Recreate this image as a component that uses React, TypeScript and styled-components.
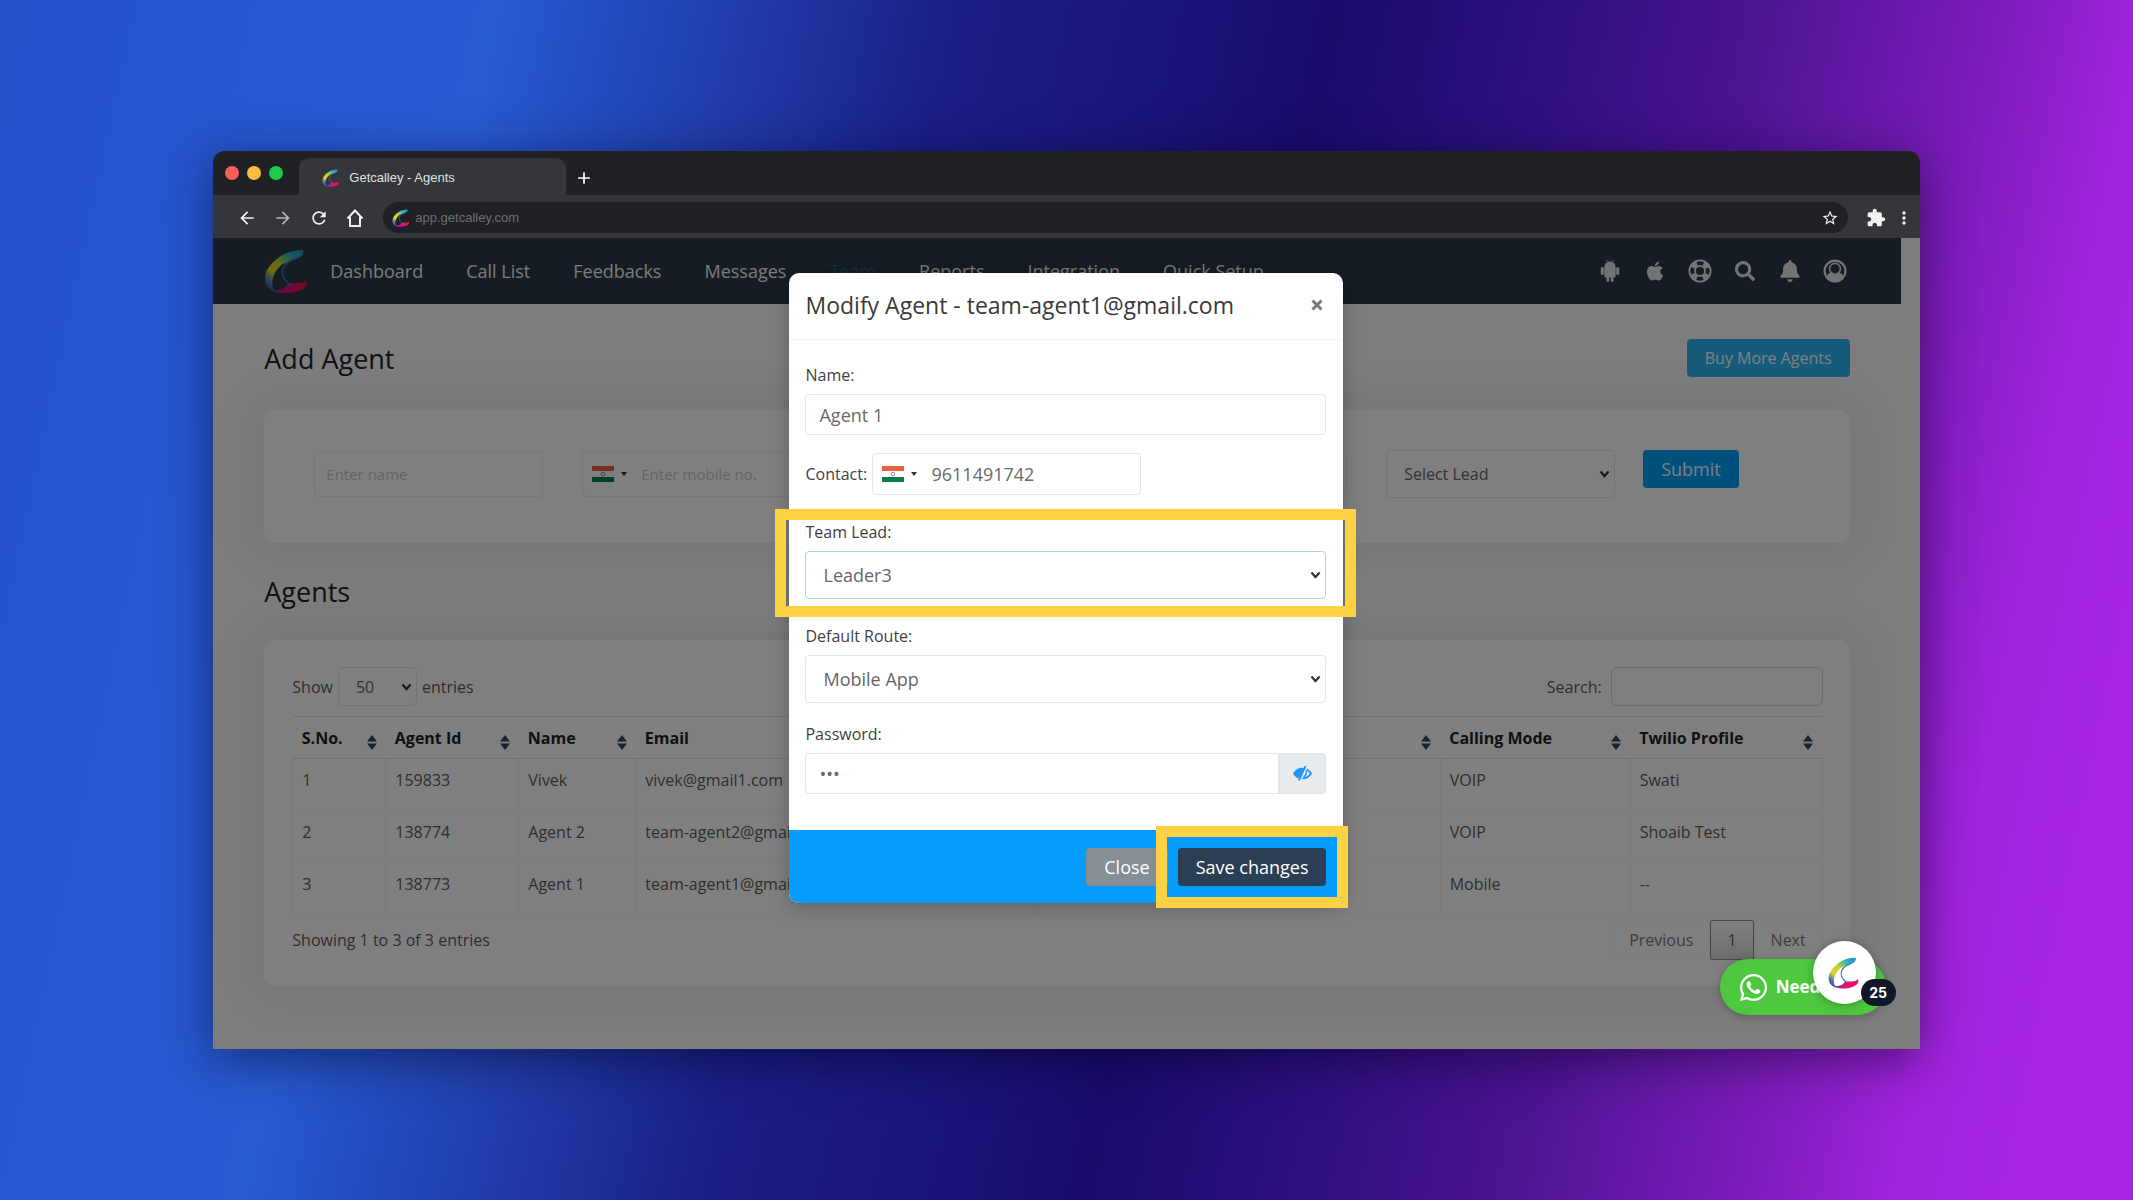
import React, { useState } from "react";
import styled, { createGlobalStyle, css } from "styled-components";
import {
  MdArrowBack,
  MdArrowForward,
  MdRefresh,
  MdStarBorder,
  MdExtension,
  MdMoreVert,
  MdAdd,
} from "react-icons/md";
import { FaApple, FaSearch, FaBell, FaWhatsapp } from "react-icons/fa";

const GlobalStyle = createGlobalStyle`
  *, *::before, *::after { box-sizing: border-box; }
  body {
    margin: 0;
    font-family: "Open Sans", "Noto Sans", sans-serif;
    font-size: 16px;
    line-height: 24px;
    color: #5c5c5c;
  }
  button, input, select { font: inherit; margin: 0; }
  button { cursor: pointer; }
`;

/* ---------- backdrop and browser frame ---------- */

const Stage = styled.div`
  display: flex;
  align-items: center;
  justify-content: center;
  min-height: 100vh;
  background: linear-gradient(
    102deg,
    #2652cc 0%,
    #2858d2 14%,
    #285ad2 21%,
    #2140ae 30%,
    #1b1f88 40%,
    #1a1478 50%,
    #190b6c 56%,
    #2f1080 65%,
    #4c1494 74%,
    #7a1cb8 83%,
    #a023dd 90%,
    #a826e8 96%
  );
`;

const BrowserWindow = styled.div`
  width: 80%;
  border-radius: 12px 12px 0 0;
  background: #35363a;
  box-shadow: 0 10px 50px rgba(0, 0, 20, 0.5);
`;

const TabStrip = styled.div`
  display: flex;
  align-items: flex-end;
  height: 44px;
  padding-left: 12px;
  border-radius: 12px 12px 0 0;
  background: #202124;
`;

const Lights = styled.div`
  display: flex;
  gap: 8px;
  align-self: center;
  margin-right: 16px;
`;

const Light = styled.span<{ $color: string }>`
  width: 14px;
  height: 14px;
  border-radius: 50%;
  background: ${(p) => p.$color};
`;

const Tab = styled.div`
  display: flex;
  align-items: center;
  gap: 9px;
  width: 267px;
  height: 37px;
  padding: 3px 0 0 23px;
  border-radius: 10px 10px 0 0;
  background: #35363a;
  color: #dfe1e5;
  font-family: "Liberation Sans", Arial, sans-serif;
  font-size: 13px;
`;

const NewTab = styled.button`
  display: flex;
  align-items: center;
  height: 34px;
  margin-left: 8px;
  padding: 0;
  border: 0;
  background: none;
  color: #fff;
  font-size: 20px;
`;

const Toolbar = styled.div`
  display: flex;
  align-items: center;
  height: 43px;
  padding: 2px 6px 0 16px;
`;

const ToolButton = styled.button<{ $dim?: boolean }>`
  display: flex;
  align-items: center;
  justify-content: center;
  width: 36px;
  height: 30px;
  padding: 0;
  border: 0;
  background: none;
  color: ${(p) => (p.$dim ? "#b4b6ba" : "#f1f1f1")};
  font-size: 20px;
`;

const AddressBar = styled.div`
  display: flex;
  flex: 1;
  align-items: center;
  gap: 5px;
  height: 31px;
  margin: 0 10px 0 10px;
  padding: 0 9px;
  border-radius: 16px;
  background: #202124;
  color: #f1f1f1;
  font-size: 18px;
`;

const AddressInput = styled.input`
  flex: 1;
  min-width: 0;
  padding: 0;
  border: 0;
  outline: 0;
  background: none;
  color: #6c6e72;
  font-family: "Liberation Sans", Arial, sans-serif;
  font-size: 13px;
`;

const MenuButton = styled(ToolButton)`
  width: 20px;
`;

/* ---------- web page ---------- */

const Viewport = styled.div`
  position: relative;
  background: #fbfbfb;
`;

const NavBar = styled.header`
  display: flex;
  align-items: center;
  height: 66px;
  margin-right: 19px;
  padding: 0 54px 0 51px;
  background: #2a3949;
`;

const NavLinks = styled.nav`
  display: flex;
  flex: 1;
  gap: 43px;
  margin-left: 21px;
`;

const NavLink = styled.a<{ $active?: boolean }>`
  color: ${(p) => (p.$active ? "#2c5878" : "#f4f4f4")};
  font-size: 18px;
  text-decoration: none;
`;

const NavIcons = styled.div`
  display: flex;
  align-items: center;
  gap: 21px;
`;

const NavIconButton = styled.button`
  display: flex;
  align-items: center;
  justify-content: center;
  width: 24px;
  height: 24px;
  padding: 0;
  border: 0;
  background: none;
  color: #e4e6e8;
  font-size: 22px;
`;

const Page = styled.main`
  padding: 0 70px 63px 51px;
`;

const TitleRow = styled.div`
  display: flex;
  align-items: center;
  justify-content: space-between;
  padding: 35px 0 33px;
`;

const Heading = styled.h1`
  margin: 0;
  color: #222;
  font-size: 27px;
  font-weight: 400;
  line-height: 37px;
`;

const SubHeading = styled(Heading).attrs({ as: "h2" })`
  padding: 30px 0;
`;

const SolidButton = styled.button<{ $tone: string; $size?: number }>`
  height: 38px;
  padding: 0 18px;
  border: 0;
  border-radius: 4px;
  background: ${(p) => p.$tone};
  color: #fff;
  font-size: ${(p) => p.$size ?? 18}px;
  white-space: nowrap;
`;

const Card = styled.section`
  border-radius: 10px;
  background: #fff;
  box-shadow: 0 0 50px 20px rgba(0, 0, 0, 0.06);
`;

const AddForm = styled.form`
  display: flex;
  gap: 28px;
  align-items: flex-start;
  padding: 40px 111px 45px 50px;
`;

const FieldGrid = styled.div`
  display: grid;
  flex: 1;
  grid-template-columns: repeat(5, minmax(0, 1fr));
  align-items: center;
  gap: 39px;
`;

const fieldBox = css`
  width: 100%;
  border: 1px solid #e6e6e6;
  border-radius: 4px;
  outline: 0;
  background: #fff;
`;

const TextField = styled.input<{ $h?: number; $pad?: number }>`
  ${fieldBox}
  height: ${(p) => p.$h ?? 41}px;
  padding: 0 ${(p) => p.$pad ?? 13}px;
  color: #6a6a6a;
  font-size: 18px;
  &::placeholder { color: #c8c8c8; opacity: 1; }
`;

const AddField = styled(TextField).attrs({ $h: 46, $pad: 11 })`
  border-color: #ececec;
  font-size: 15px;
`;

const PhoneBox = styled.div<{ $h: number; $light?: boolean }>`
  ${fieldBox}
  display: flex;
  align-items: center;
  height: ${(p) => p.$h}px;
  padding-left: 9px;
  font-size: ${(p) => (p.$light ? 15 : 18)}px;
  border-color: ${(p) => (p.$light ? "#ececec" : "#e6e6e6")};
`;

const PhoneInput = styled.input`
  flex: 1;
  min-width: 0;
  padding: 0 0 0 14px;
  border: 0;
  outline: 0;
  background: none;
  color: #6a6a6a;
  &::placeholder { color: #c8c8c8; opacity: 1; }
`;

const FlagButton = styled.button`
  display: flex;
  align-items: center;
  gap: 7px;
  padding: 0;
  border: 0;
  background: none;
`;

const Caret = styled.span`
  border: 3px solid transparent;
  border-top: 4px solid #333;
  border-bottom: 0;
`;

const SelectWrap = styled.div<{ $w?: number }>`
  position: relative;
  width: ${(p) => (p.$w ? `${p.$w}px` : "100%")};

  svg {
    position: absolute;
    top: 50%;
    right: 5px;
    width: 11px;
    height: 8px;
    margin-top: -4px;
    pointer-events: none;
  }
`;

const NativeSelect = styled.select<{ $h: number; $focus?: boolean; $size?: number }>`
  ${fieldBox}
  display: block;
  height: ${(p) => p.$h}px;
  padding: 0 17px;
  appearance: none;
  color: #666;
  font-size: ${(p) => p.$size ?? 16}px;
  border-color: ${(p) => (p.$focus ? "#a9d3de" : "#e6e6e6")};
`;

const TableCard = styled(Card)`
  padding: 27px 27px 26px 28px;
`;

const TableTools = styled.div`
  display: flex;
  align-items: center;
  justify-content: space-between;
  margin-bottom: 10px;
`;

const InlineLabel = styled.label`
  display: flex;
  align-items: center;
  gap: 5px;
  color: #5c5c5c;
`;

const SearchField = styled(TextField).attrs({ $h: 39 })`
  width: 212px;
  margin-left: 4px;
  border-color: #d8d8d8;
  border-radius: 6px;
`;

const AgentTable = styled.table`
  width: 100%;
  border-collapse: collapse;
  table-layout: fixed;
`;

const Column = styled.col<{ $w?: string }>`
  width: ${(p) => p.$w ?? "auto"};
`;

const HeadCell = styled.th`
  height: 42px;
  padding: 0 9px;
  border-top: 1px solid #e4e4e4;
  border-bottom: 1px solid #e4e4e4;
  color: #222;
  font-size: 16px;
  font-weight: 700;
  text-align: left;
`;

const HeadLabel = styled.div`
  display: flex;
  align-items: center;
  justify-content: space-between;
  height: 24px;

  svg { margin-top: 9px; }
`;

const BodyCell = styled.td`
  height: 52px;
  padding: 9px 0 0 9px;
  border: 1px solid #f4f4f4;
  color: #5c5c5c;
  vertical-align: top;
  white-space: nowrap;
`;

const TableFoot = styled.div`
  display: flex;
  align-items: center;
  justify-content: space-between;
  margin-top: 5px;
`;

const Pager = styled.div`
  display: flex;
  height: 40px;
`;

const PageButton = styled.button<{ $current?: boolean }>`
  padding: 0 16px;
  border: 1px solid ${(p) => (p.$current ? "#8c8c8c" : "#f6f6f6")};
  border-radius: 2px;
  background: ${(p) => (p.$current ? "linear-gradient(#fff, #dcdcdc)" : "none")};
  color: ${(p) => (p.$current ? "#5c5c5c" : "#7a7a7a")};
`;

/* ---------- dialog ---------- */

const Overlay = styled.div`
  position: absolute;
  inset: 0;
  display: flex;
  align-items: flex-start;
  justify-content: center;
  padding-top: 35px;
  background: rgba(0, 0, 0, 0.5);
`;

const Dialog = styled.div`
  width: 554px;
  border-radius: 10px;
  background: #fff;
  box-shadow: 0 4px 20px rgba(0, 0, 0, 0.25);
`;

const DialogHeader = styled.div`
  display: flex;
  align-items: center;
  justify-content: space-between;
  height: 67px;
  padding: 0 16px 2px;
  border-bottom: 1px solid #f5f5f5;
`;

const DialogTitle = styled.h2`
  margin: 0;
  color: #3a3a3a;
  font-size: 23px;
  font-weight: 400;
`;

const CloseIcon = styled.button`
  display: flex;
  align-items: center;
  justify-content: center;
  width: 20px;
  height: 20px;
  padding: 0;
  border: 0;
  background: none;
`;

const DialogBody = styled.form`
  display: flex;
  flex-direction: column;
  padding: 23px 17px 36px 16px;
`;

const Group = styled.div<{ $after?: number }>`
  position: relative;
  margin-bottom: ${(p) => p.$after ?? 0}px;
`;

const InlineGroup = styled(Group)`
  display: flex;
  align-items: center;
  justify-content: flex-start;
`;

const FieldLabel = styled.label<{ $inline?: boolean }>`
  display: block;
  min-width: 67px;
  margin-bottom: ${(p) => (p.$inline ? 0 : 7)}px;
  color: #3f3f3f;
  font-size: 16px;
`;

const ContactBox = styled.div`
  width: 269px;
`;

const PasswordRow = styled.div`
  display: flex;

  input { border-radius: 4px 0 0 4px; }
`;

const Reveal = styled.button`
  display: flex;
  flex: none;
  align-items: center;
  justify-content: center;
  width: 47px;
  padding: 0;
  border: 1px solid #dfe3e7;
  border-radius: 0 4px 4px 0;
  background: #e6ebef;
`;

const DialogFooter = styled.div`
  display: flex;
  align-items: center;
  justify-content: flex-end;
  gap: 10px;
  height: 73px;
  padding: 0 17px;
  border-radius: 0 0 10px 10px;
  background: #049cff;
`;

const SaveSlot = styled.div`
  position: relative;
`;

const Marker = styled.span<{ $top: number; $side: number; $bottom: number }>`
  position: absolute;
  inset: -${(p) => p.$top}px -${(p) => p.$side}px -${(p) => p.$bottom}px;
  border: 11px solid #fdd144;
  pointer-events: none;
`;

/* ---------- floating help ---------- */

const HelpChip = styled.button`
  position: absolute;
  right: 34px;
  bottom: 34px;
  display: flex;
  align-items: center;
  gap: 7px;
  width: 166px;
  height: 56px;
  padding: 0 18px;
  border: 0;
  border-radius: 28px;
  background: #4dc83f;
  box-shadow: 0 2px 8px rgba(0, 0, 0, 0.25);
  color: #fff;
  font-size: 17px;
  font-weight: 700;

  svg { font-size: 31px; }
`;

const HelpBubble = styled.button`
  position: absolute;
  right: 44px;
  bottom: 45px;
  display: flex;
  align-items: center;
  justify-content: center;
  width: 63px;
  height: 63px;
  padding: 0;
  border: 0;
  border-radius: 50%;
  background: #fff;
  box-shadow: 0 1px 8px rgba(0, 0, 0, 0.3);
`;

const HelpCount = styled.span`
  position: absolute;
  right: -20px;
  bottom: -2px;
  width: 35px;
  height: 27px;
  border-radius: 14px;
  background: #101828;
  color: #fff;
  font-family: Inter, sans-serif;
  font-size: 14px;
  font-weight: 700;
  line-height: 27px;
  text-align: center;
`;

/* ---------- drawings ---------- */

const Logo = ({ id, size }: { id: string; size: number }) => (
  <svg width={size} height={size} viewBox="0 0 46 46" aria-hidden="true">
    <defs>
      <linearGradient id={`${id}-a`} x1="0.9" y1="0" x2="0.15" y2="1">
        <stop offset="0" stopColor="#2b8fc4" />
        <stop offset="0.22" stopColor="#35b6bd" />
        <stop offset="0.45" stopColor="#c5cf2f" />
        <stop offset="0.68" stopColor="#e3d42c" />
        <stop offset="0.86" stopColor="#4a79b8" />
        <stop offset="1" stopColor="#5b3b96" />
      </linearGradient>
      <linearGradient id={`${id}-b`} x1="0" y1="0" x2="1" y2="0">
        <stop offset="0" stopColor="#3f57a6" />
        <stop offset="0.35" stopColor="#c2188b" />
        <stop offset="0.7" stopColor="#ee0f6c" />
        <stop offset="1" stopColor="#f0143c" />
      </linearGradient>
    </defs>
    <path
      d="M37 1C23 1 7 12 2 24C-1 33 2 41 11 44C6 35 9 24 17 17C24 11 38 12 40 4C41 1 39 1 37 1Z"
      fill={`url(#${id}-a)`}
    />
    <path
      d="M6 40C13 44 21 41 24 36C29 34 39 37 43 32C45 37 42 41 35 43C25 46 11 47 6 40Z"
      fill={`url(#${id}-b)`}
    />
    <path
      d="M34 9C23 13 18 19 19 25C20 31 23 35 29 37"
      fill="none"
      stroke="#3f74bd"
      strokeWidth="1.600"
    />
  </svg>
);

const HomeIcon = () => (
  <svg width="18" height="20" viewBox="0 0 18 20" fill="none" stroke="currentColor" strokeWidth="2" aria-hidden="true">
    <path d="M1.500 10.500L9 2.500L16.500 10.500M4 9V18H14V9" />
  </svg>
);

const AndroidIcon = () => (
  <svg width="20" height="24" viewBox="0 0 20 24" fill="currentColor" aria-hidden="true">
    <path d="M4.500 8C4.500 4.600 7 2.400 10 2.400S15.500 4.600 15.500 8Z" />
    <path d="M4.300 8H15.700V17a1.500 1.500 0 0 1-1.500 1.500H5.800A1.500 1.500 0 0 1 4.300 17Z" />
    <rect x="0.800" y="8" width="3" height="8" rx="1.500" />
    <rect x="16.200" y="8" width="3" height="8" rx="1.500" />
    <rect x="6.400" y="17" width="2.800" height="6" rx="1.400" />
    <rect x="10.800" y="17" width="2.800" height="6" rx="1.400" />
    <path d="M6.500 1L8 3.600M13.500 1L12 3.600" stroke="currentColor" strokeWidth="0.800" />
  </svg>
);

const LifeRingIcon = () => (
  <svg width="24" height="24" viewBox="0 0 24 24" fill="none" stroke="currentColor" aria-hidden="true">
    <circle cx="12" cy="12" r="10.600" strokeWidth="1.800" />
    <circle cx="12" cy="12" r="5" strokeWidth="1.800" />
    <circle cx="12" cy="12" r="8" strokeWidth="5" strokeDasharray="6.283 6.283" strokeDashoffset="-3.142" />
  </svg>
);

const UserCircleIcon = () => (
  <svg width="24" height="24" viewBox="0 0 24 24" aria-hidden="true">
    <circle cx="12" cy="12" r="10.400" fill="none" stroke="currentColor" strokeWidth="2.200" />
    <path d="M3.500 18C4 14.500 7 13 12 13S20 14.500 20.500 18C18 21.500 15 22.500 12 22.500S6 21.500 3.500 18Z" fill="currentColor" />
    <circle cx="12" cy="9.800" r="5.400" fill="#2a3949" stroke="currentColor" strokeWidth="1.600" />
  </svg>
);

const ChevronIcon = () => (
  <svg viewBox="0 0 11 8" fill="none" stroke="#333" strokeWidth="2.200" aria-hidden="true">
    <path d="M1.500 1.500L5.500 6L9.500 1.500" />
  </svg>
);

const SortIcon = () => (
  <svg width="10" height="15" viewBox="0 0 10 15" fill="#34495e" aria-hidden="true">
    <path d="M5 0L10 6.500H0ZM5 15L0 8.500H10Z" />
  </svg>
);

const FlagIcon = () => (
  <svg width="22" height="16" viewBox="0 0 22 16" aria-hidden="true">
    <rect width="22" height="16" fill="#fff" />
    <rect width="22" height="5" fill="#e8643c" />
    <rect y="11" width="22" height="5" fill="#0b7d4b" />
    <circle cx="11" cy="8" r="1.800" fill="none" stroke="#8a8aa8" strokeWidth="1" />
  </svg>
);

const CrossIcon = () => (
  <svg width="12" height="12" viewBox="0 0 12 12" stroke="#777" strokeWidth="3" aria-hidden="true">
    <path d="M1.500 1.500L10.500 10.500M10.500 1.500L1.500 10.500" />
  </svg>
);

const EyeSlashIcon = () => (
  <svg width="19" height="15" viewBox="0 0 19 15" aria-hidden="true">
    <path d="M1 7.500C5 1 14 1 18 7.500C14 14 5 14 1 7.500Z" fill="none" stroke="#2196f3" strokeWidth="1.800" />
    <path d="M11 2C6 2 3 4 1 7.500C3 10.500 5 11.800 7 12.300Z" fill="#2196f3" />
    <path d="M13.500 0L6.500 15" stroke="#e6ebef" strokeWidth="3" />
    <path d="M12.500 0L6 14.500" stroke="#1288ea" strokeWidth="1.600" />
    <path d="M13 4.500C14.200 7 13 9.800 10.500 10.800" fill="none" stroke="#2196f3" strokeWidth="1.600" />
  </svg>
);

/* ---------- data ---------- */

const navItems = ["Dashboard", "Call List", "Feedbacks", "Messages", "Team", "Reports", "Integration", "Quick Setup"];

const columns = [
  { label: "S.No.", width: "93px" },
  { label: "Agent Id", width: "133px" },
  { label: "Name", width: "117px" },
  { label: "Email" },
  { label: "" },
  { label: "Calling Mode", width: "190px" },
  { label: "Twilio Profile", width: "192px" },
];

const agents = [
  { id: "159833", name: "Vivek", email: "vivek@gmail1.com", mode: "VOIP", profile: "Swati" },
  { id: "138774", name: "Agent 2", email: "team-agent2@gmail.com", mode: "VOIP", profile: "Shoaib Test" },
  { id: "138773", name: "Agent 1", email: "team-agent1@gmail.com", mode: "Mobile", profile: "--" },
];

/* ---------- components ---------- */

type SelectProps = {
  id?: string;
  label?: string;
  options: string[];
  height: number;
  width?: number;
  size?: number;
  focus?: boolean;
};

const Select = ({ id, label, options, height, width, size, focus }: SelectProps) => (
  <SelectWrap $w={width}>
    <NativeSelect id={id} aria-label={label} $h={height} $size={size} $focus={focus}>
      {options.map((o) => (
        <option key={o}>{o}</option>
      ))}
    </NativeSelect>
    <ChevronIcon />
  </SelectWrap>
);

const FlagPicker = () => (
  <FlagButton type="button" aria-label="Country">
    <FlagIcon />
    <Caret />
  </FlagButton>
);

const BrowserChrome = () => (
  <>
    <TabStrip>
      <Lights>
        <Light $color="#fc605b" />
        <Light $color="#fdbc40" />
        <Light $color="#1fc94f" />
      </Lights>
      <Tab>
        <Logo id="tab" size={18} />
        Getcalley - Agents
      </Tab>
      <NewTab aria-label="New tab">
        <MdAdd />
      </NewTab>
    </TabStrip>
    <Toolbar>
      <ToolButton aria-label="Back"><MdArrowBack /></ToolButton>
      <ToolButton aria-label="Forward" $dim><MdArrowForward /></ToolButton>
      <ToolButton aria-label="Reload"><MdRefresh /></ToolButton>
      <ToolButton aria-label="Home"><HomeIcon /></ToolButton>
      <AddressBar>
        <Logo id="url" size={18} />
        <AddressInput aria-label="Address" defaultValue="app.getcalley.com" />
        <MdStarBorder />
      </AddressBar>
      <ToolButton aria-label="Extensions"><MdExtension /></ToolButton>
      <MenuButton aria-label="Menu"><MdMoreVert /></MenuButton>
    </Toolbar>
  </>
);

const SiteNav = () => (
  <NavBar>
    <Logo id="brand" size={45} />
    <NavLinks>
      {navItems.map((item) => (
        <NavLink key={item} href="#" $active={item === "Team"}>
          {item}
        </NavLink>
      ))}
    </NavLinks>
    <NavIcons>
      <NavIconButton aria-label="Android app"><AndroidIcon /></NavIconButton>
      <NavIconButton aria-label="Apple app"><FaApple /></NavIconButton>
      <NavIconButton aria-label="Support"><LifeRingIcon /></NavIconButton>
      <NavIconButton aria-label="Search"><FaSearch size={20} /></NavIconButton>
      <NavIconButton aria-label="Notifications"><FaBell /></NavIconButton>
      <NavIconButton aria-label="Account"><UserCircleIcon /></NavIconButton>
    </NavIcons>
  </NavBar>
);

const AddAgentForm = () => (
  <Card>
    <AddForm>
      <FieldGrid>
        <AddField aria-label="Name" placeholder="Enter name" />
        <PhoneBox $h={46} $light>
          <FlagPicker />
          <PhoneInput aria-label="Mobile number" placeholder="Enter mobile no." />
        </PhoneBox>
        <AddField aria-label="Email" />
        <AddField aria-label="Password" type="password" />
        <Select label="Lead" options={["Select Lead"]} height={48} />
      </FieldGrid>
      <SolidButton type="button" $tone="#00a0f8">Submit</SolidButton>
    </AddForm>
  </Card>
);

const AgentList = () => (
  <TableCard>
    <TableTools>
      <InlineLabel>
        Show
        <Select options={["50"]} height={39} width={79} />
        entries
      </InlineLabel>
      <InlineLabel>
        Search:
        <SearchField type="search" />
      </InlineLabel>
    </TableTools>
    <AgentTable>
      <colgroup>
        {columns.map((c, i) => (
          <Column key={i} $w={c.width} />
        ))}
      </colgroup>
      <thead>
        <tr>
          {columns.map((c, i) => (
            <HeadCell key={i}>
              <HeadLabel>
                <span>{c.label}</span>
                <SortIcon />
              </HeadLabel>
            </HeadCell>
          ))}
        </tr>
      </thead>
      <tbody>
        {agents.map((a, i) => (
          <tr key={a.id}>
            <BodyCell>{i + 1}</BodyCell>
            <BodyCell>{a.id}</BodyCell>
            <BodyCell>{a.name}</BodyCell>
            <BodyCell>{a.email}</BodyCell>
            <BodyCell />
            <BodyCell>{a.mode}</BodyCell>
            <BodyCell>{a.profile}</BodyCell>
          </tr>
        ))}
      </tbody>
    </AgentTable>
    <TableFoot>
      <span>Showing 1 to 3 of 3 entries</span>
      <Pager>
        <PageButton>Previous</PageButton>
        <PageButton $current>1</PageButton>
        <PageButton>Next</PageButton>
      </Pager>
    </TableFoot>
  </TableCard>
);

const ModifyAgentDialog = () => {
  const [visible, setVisible] = useState(false);
  return (
    <Overlay>
      <Dialog role="dialog" aria-labelledby="dialog-title">
        <DialogHeader>
          <DialogTitle id="dialog-title">Modify Agent - team-agent1@gmail.com</DialogTitle>
          <CloseIcon aria-label="Close dialog"><CrossIcon /></CloseIcon>
        </DialogHeader>
        <DialogBody>
          <Group $after={18}>
            <FieldLabel htmlFor="name">Name:</FieldLabel>
            <TextField id="name" defaultValue="Agent 1" />
          </Group>
          <InlineGroup $after={25}>
            <FieldLabel htmlFor="contact" $inline>Contact:</FieldLabel>
            <ContactBox>
              <PhoneBox $h={42}>
                <FlagPicker />
                <PhoneInput id="contact" defaultValue="9611491742" />
              </PhoneBox>
            </ContactBox>
          </InlineGroup>
          <Group $after={25}>
            <FieldLabel htmlFor="lead">Team Lead:</FieldLabel>
            <Select id="lead" options={["Leader3"]} height={48} size={18} focus />
            <Marker $top={11} $side={30} $bottom={18} />
          </Group>
          <Group $after={19}>
            <FieldLabel htmlFor="route">Default Route:</FieldLabel>
            <Select id="route" options={["Mobile App"]} height={48} size={18} />
          </Group>
          <Group>
            <FieldLabel htmlFor="password">Password:</FieldLabel>
            <PasswordRow>
              <TextField id="password" type={visible ? "text" : "password"} defaultValue="123" />
              <Reveal type="button" aria-label="Show password" onClick={() => setVisible(!visible)}>
                <EyeSlashIcon />
              </Reveal>
            </PasswordRow>
          </Group>
        </DialogBody>
        <DialogFooter>
          <SolidButton $tone="#868e96">Close</SolidButton>
          <SaveSlot>
            <SolidButton $tone="#2a3f54">Save changes</SolidButton>
            <Marker $top={22} $side={22} $bottom={22} />
          </SaveSlot>
        </DialogFooter>
      </Dialog>
    </Overlay>
  );
};

export default function App() {
  return (
    <>
      <GlobalStyle />
      <Stage>
        <BrowserWindow>
          <BrowserChrome />
          <Viewport>
            <SiteNav />
            <Page>
              <TitleRow>
                <Heading>Add Agent</Heading>
                <SolidButton $tone="#2cb4f6" $size={16}>Buy More Agents</SolidButton>
              </TitleRow>
              <AddAgentForm />
              <SubHeading>Agents</SubHeading>
              <AgentList />
            </Page>
            <ModifyAgentDialog />
            <HelpChip>
              <FaWhatsapp />
              Need
            </HelpChip>
            <HelpBubble aria-label="Open help">
              <Logo id="help" size={32} />
              <HelpCount>25</HelpCount>
            </HelpBubble>
          </Viewport>
        </BrowserWindow>
      </Stage>
    </>
  );
}
